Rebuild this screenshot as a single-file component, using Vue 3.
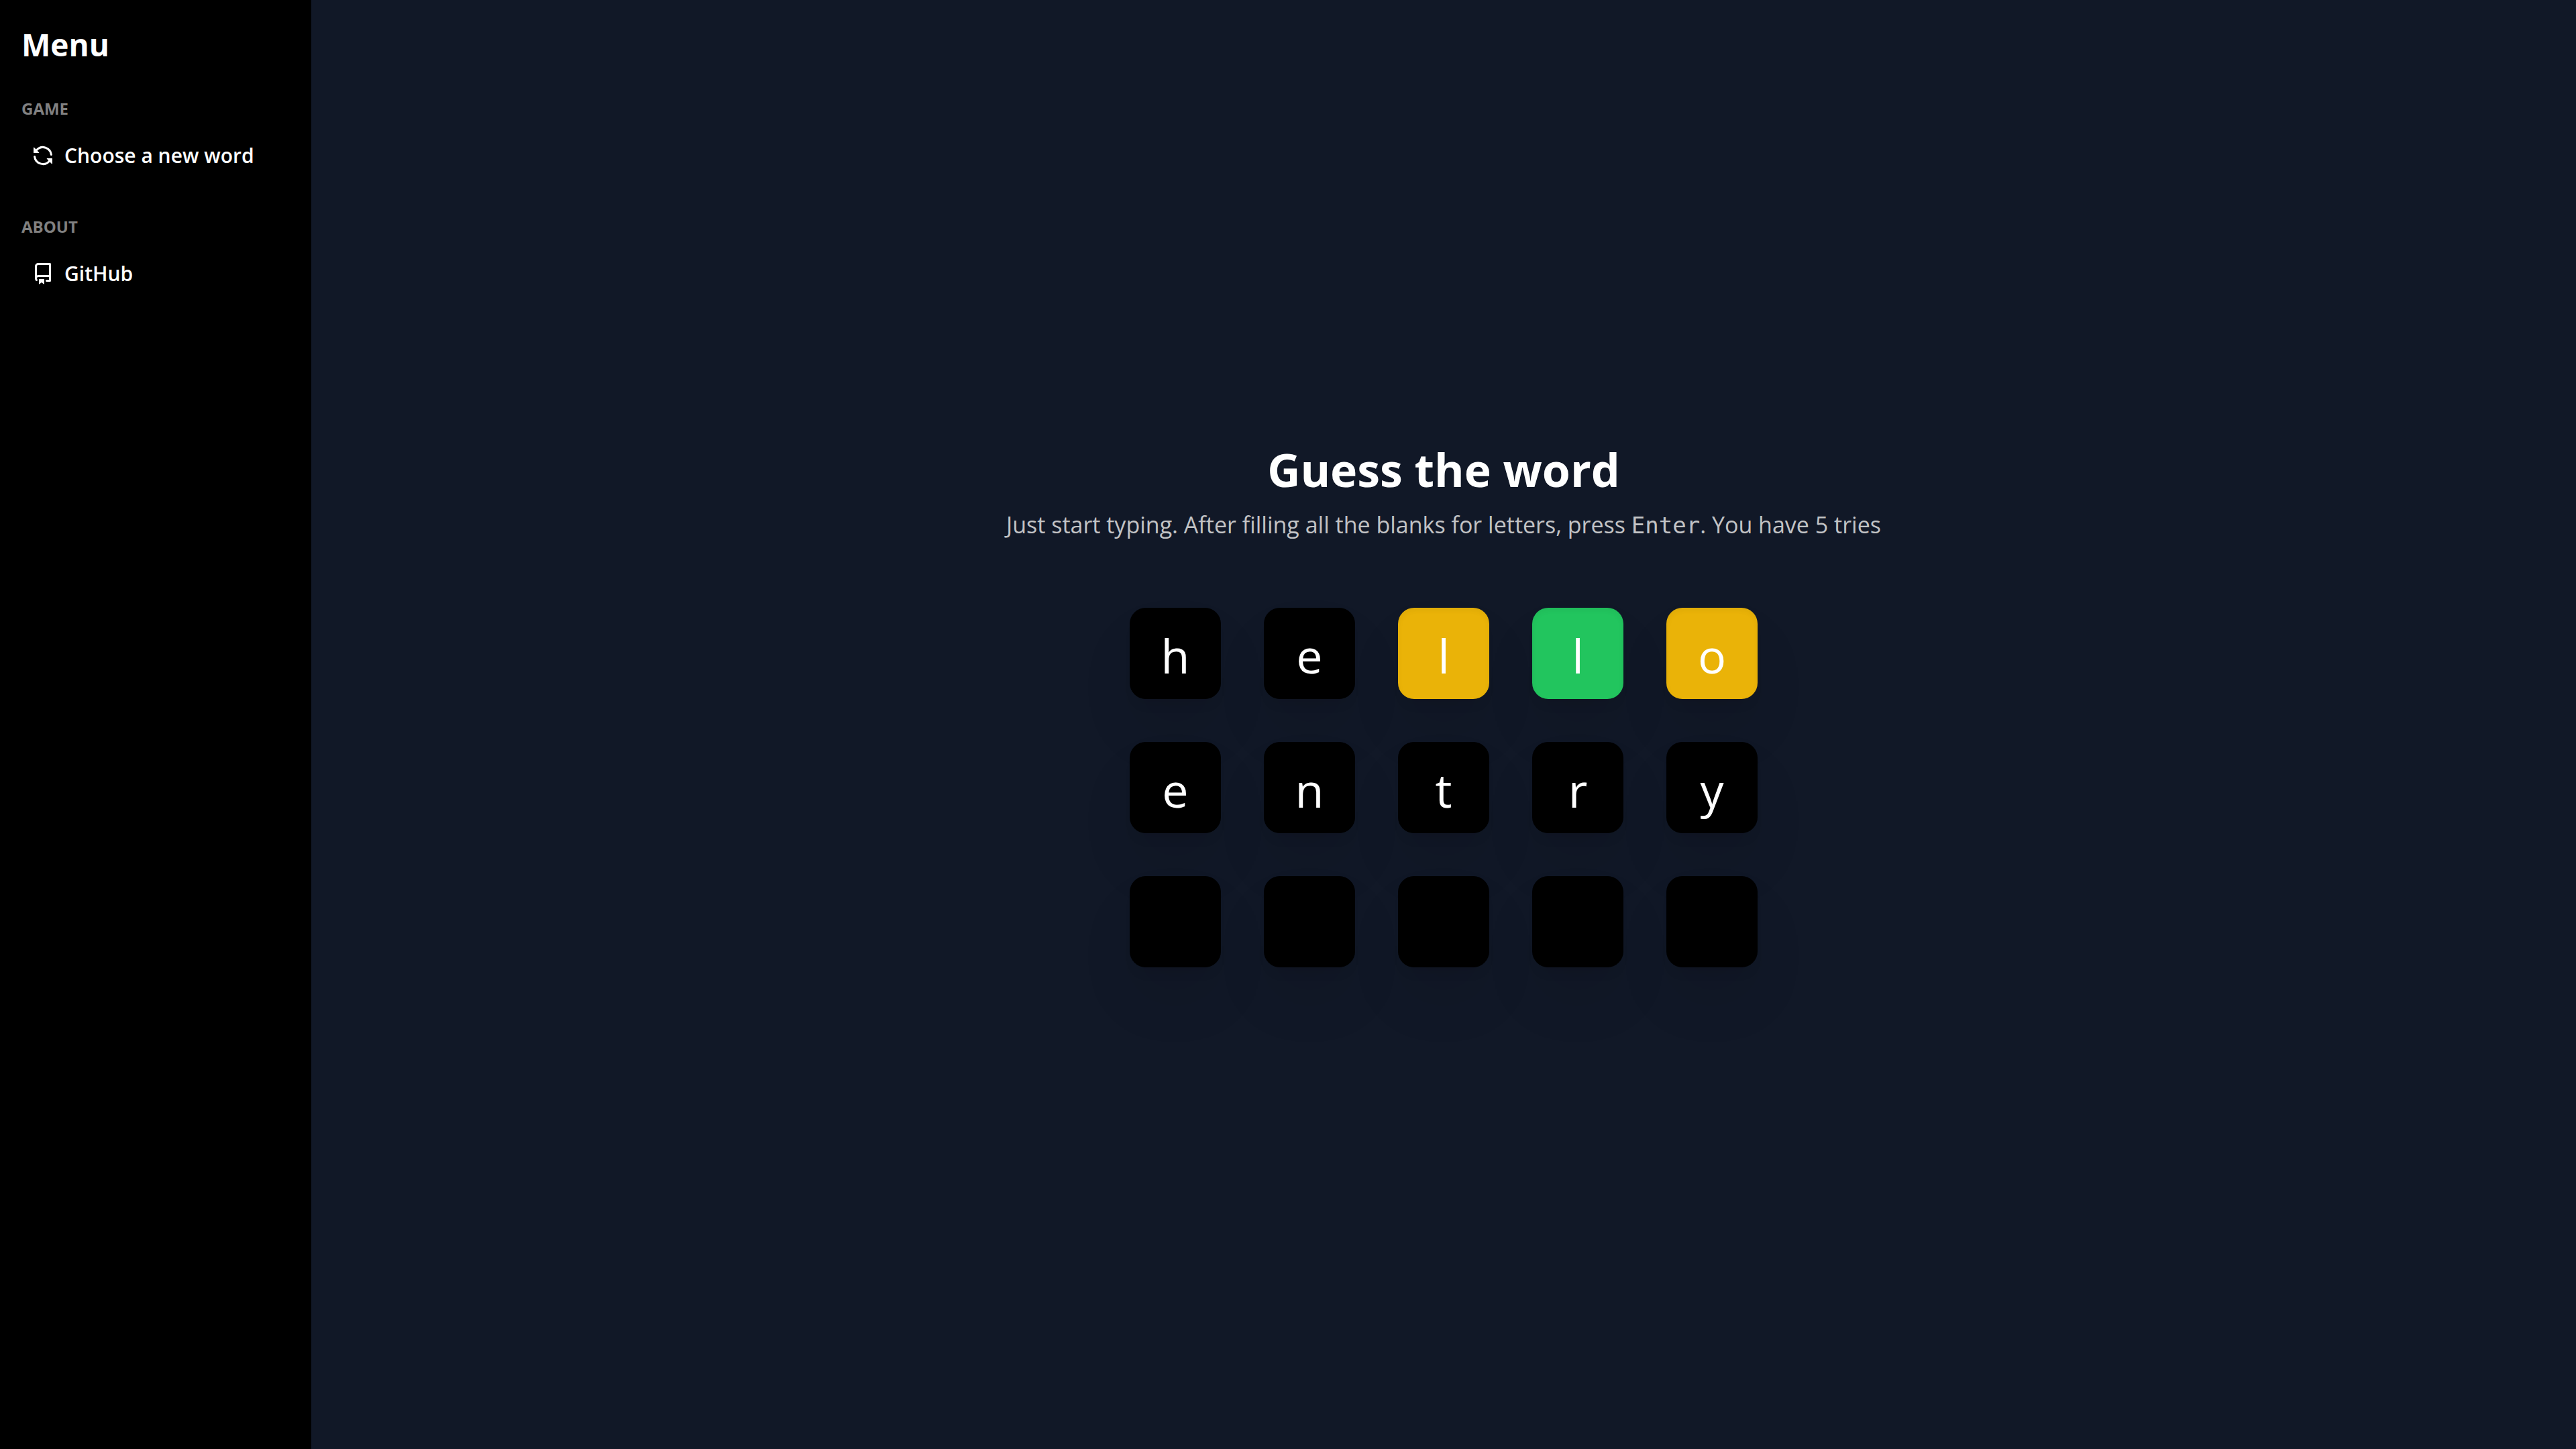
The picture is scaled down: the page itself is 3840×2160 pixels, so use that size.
<script setup>
import { ref } from 'vue'

const maxTries = 5
const rows = ref([
  [
    { letter: 'h', state: 'absent' },
    { letter: 'e', state: 'absent' },
    { letter: 'l', state: 'present' },
    { letter: 'l', state: 'correct' },
    { letter: 'o', state: 'present' },
  ],
  [...'entry'].map((letter) => ({ letter, state: 'absent' })),
  Array.from({ length: 5 }, () => ({ letter: '', state: 'absent' })),
])
</script>

<template>
  <div class="app">
    <aside class="sidebar">
      <h2 class="sidebar-title">Menu</h2>
      <nav class="sections" aria-label="Menu">
        <section>
          <h3 class="section-title">GAME</h3>
          <button type="button" class="item">
            <svg class="icon" viewBox="0 0 16 16" aria-hidden="true">
              <path d="M1.705 8.005a.75.75 0 0 1 .834.656 5.5 5.5 0 0 0 9.592 2.97l-1.204-1.204a.25.25 0 0 1 .177-.427h3.646a.25.25 0 0 1 .25.25v3.646a.25.25 0 0 1-.427.177l-1.38-1.38A7.002 7.002 0 0 1 1.05 8.84a.75.75 0 0 1 .656-.834ZM8 2.5a5.487 5.487 0 0 0-4.131 1.869l1.204 1.204A.25.25 0 0 1 4.896 6H1.25A.25.25 0 0 1 1 5.75V2.104a.25.25 0 0 1 .427-.177l1.38 1.38A7.002 7.002 0 0 1 14.95 7.16a.75.75 0 0 1-1.49.178A5.5 5.5 0 0 0 8 2.5Z" />
            </svg>
            <span>Choose a new word</span>
          </button>
        </section>
        <section>
          <h3 class="section-title">ABOUT</h3>
          <a href="#github" class="item">
            <svg class="icon" viewBox="0 0 16 16" aria-hidden="true">
              <path d="M2 2.5A2.5 2.5 0 0 1 4.5 0h8.75a.75.75 0 0 1 .75.75v12.5a.75.75 0 0 1-.75.75h-2.5a.75.75 0 0 1 0-1.5h1.75v-2h-8a1 1 0 0 0-.714 1.7.75.75 0 1 1-1.072 1.05A2.495 2.495 0 0 1 2 11.5Zm10.5-1h-8a1 1 0 0 0-1 1v6.708A2.486 2.486 0 0 1 4.5 9h8ZM5 12.25a.25.25 0 0 1 .25-.25h3.5a.25.25 0 0 1 .25.25v3.25a.25.25 0 0 1-.4.2l-1.45-1.087a.249.249 0 0 0-.3 0L5.4 15.7a.25.25 0 0 1-.4-.2Z" />
            </svg>
            <span>GitHub</span>
          </a>
        </section>
      </nav>
    </aside>

    <main class="game">
      <header class="intro">
        <h1 class="title">Guess the word</h1>
        <p class="hint">
          Just start typing. After filling all the blanks for letters, press
          <kbd>Enter</kbd>. You have {{ maxTries }} tries
        </p>
      </header>
      <div class="board">
        <div v-for="(row, r) in rows" :key="r" class="row">
          <div v-for="(cell, c) in row" :key="c" class="cell" :class="cell.state">{{ cell.letter }}</div>
        </div>
      </div>
    </main>
  </div>
</template>

<style>
body {
  margin: 0;
  background: #111827;
}
</style>

<style scoped>
.app {
  display: flex;
  min-height: 100vh;
  background: #111827;
  color: #fff;
  font-family: "Segoe UI", "Open Sans", "Noto Sans", sans-serif;
}

.sidebar {
  box-sizing: border-box;
  flex: none;
  width: 464px;
  padding: 32px;
  background: #000;
}

.sidebar-title {
  margin: 0 0 40px;
  font-size: 46px;
  font-weight: 700;
  line-height: 68px;
}

.sections {
  display: flex;
  flex-direction: column;
  gap: 48px;
}

.section-title {
  margin: 0 0 12px;
  color: #808080;
  font-size: 24px;
  font-weight: 700;
  line-height: 44px;
}

.item {
  box-sizing: border-box;
  display: flex;
  align-items: center;
  gap: 16px;
  width: 100%;
  height: 72px;
  padding: 0 16px;
  border: 0;
  border-radius: 12px;
  background: none;
  color: #fff;
  font: inherit;
  font-size: 30px;
  font-weight: 600;
  line-height: 44px;
  text-align: left;
  text-decoration: none;
  white-space: nowrap;
  cursor: pointer;
}

.icon {
  flex: none;
  width: 32px;
  height: 32px;
  fill: currentColor;
}

.game {
  flex: 1;
  display: flex;
  flex-direction: column;
  align-items: center;
  justify-content: center;
}

.intro {
  margin-bottom: 96px;
  text-align: center;
}

.title {
  margin: 0 0 8px;
  font-size: 68px;
  font-weight: 700;
  line-height: 92px;
}

.hint {
  margin: 0;
  color: #c2c3c5;
  font-size: 34px;
  line-height: 56px;
}

.hint kbd {
  font-family: Consolas, "DejaVu Sans Mono", monospace;
  font-size: 34px;
  line-height: 1;
}

.board {
  display: flex;
  flex-direction: column;
  gap: 64px;
  margin-bottom: 64px;
}

.row {
  display: flex;
  gap: 64px;
}

.cell {
  box-sizing: border-box;
  display: flex;
  align-items: center;
  justify-content: center;
  width: 136px;
  height: 136px;
  padding-top: 6px;
  border-radius: 24px;
  background: #000;
  box-shadow:
    inset 0 4px 8px rgba(0, 0, 0, 0.05),
    0 16px 20px -12px rgba(0, 0, 0, 0.1),
    0 50px 100px -24px rgba(0, 0, 0, 0.16);
  font-size: 70px;
  line-height: 96px;
}

.cell.present {
  background: #eab308;
}

.cell.correct {
  background: #22c55e;
}
</style>
